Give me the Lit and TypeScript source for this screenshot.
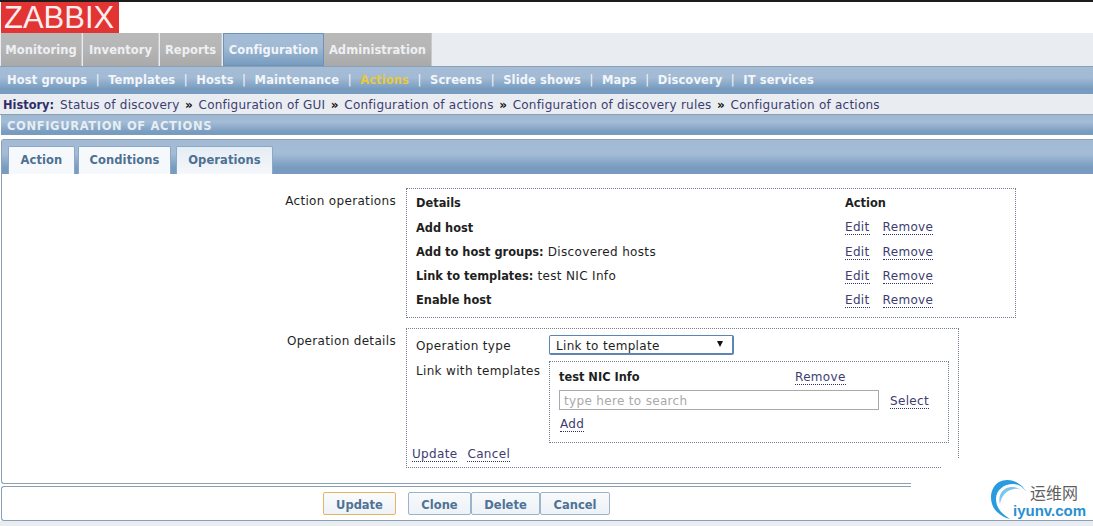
import { LitElement, html, css } from "lit";
import { customElement } from "lit/decorators.js";

const mainTabs = [
  { label: "Monitoring", w: 81 },
  { label: "Inventory", w: 76 },
  { label: "Reports", w: 62 },
  { label: "Configuration", w: 101, active: true },
  { label: "Administration", w: 108 },
];
const subTabs = ["Host groups", "Templates", "Hosts", "Maintenance", "Actions", "Screens", "Slide shows", "Maps", "Discovery", "IT services"];
const history = ["Status of discovery", "Configuration of GUI", "Configuration of actions", "Configuration of discovery rules", "Configuration of actions"];
const operations = [
  { bold: "Add host", text: "" },
  { bold: "Add to host groups:", text: " Discovered hosts" },
  { bold: "Link to templates:", text: " test NIC Info" },
  { bold: "Enable host", text: "" },
];

@customElement("app-root")
export class AppRoot extends LitElement {
  static styles = css`
    :host {
      display: block;
      position: relative;
      width: 1093px;
      height: 526px;
      overflow: hidden;
      background: #fff;
      font-family: "DejaVu Sans", Verdana, sans-serif;
      font-size: 12px;
      letter-spacing: 0.33px;
      color: #1f1f1f;
    }
    b {
      font-size: 11.4px;
      letter-spacing: 0;
    }
    .top {
      height: 33px;
      box-sizing: border-box;
      border-top: 2px solid #1c1c1c;
      padding-left: 1px;
    }
    .logo {
      width: 118px;
      height: 31px;
      background: #e33434;
      color: #fbeeee;
      font-family: "Liberation Sans", sans-serif;
      font-size: 31px;
      line-height: 30px;
      letter-spacing: 0;
      padding: 1px 0 0 3px;
      box-sizing: border-box;
    }
    .main-menu {
      display: flex;
      height: 33px;
      background: #e9edf1;
      padding-left: 1px;
    }
    .main-tab {
      box-sizing: border-box;
      height: 33px;
      margin-right: 1px;
      display: flex;
      align-items: center;
      justify-content: center;
      font-weight: bold;
      font-size: 11.5px;
      letter-spacing: 0.05px;
      color: #eef0f2;
      background: linear-gradient(#b9b9b9, #b6b6b6 45%, #a9a9a9);
      border-right: 1px solid #c9c9c9;
    }
    .main-tab.active {
      margin-right: 0;
      color: #f1f5f9;
      background: linear-gradient(#a4bcd6, #a2bad4 40%, #789cc0);
      border: 1px solid #6f93b8;
    }
    .sub-menu {
      box-sizing: border-box;
      height: 28px;
      display: flex;
      align-items: center;
      padding: 0 0 2px 7px;
      border-top: 1px solid #8ba0b5;
      background: linear-gradient(#a4bcd6, #a2bad4 40%, #789cc0 80%);
      color: #f2f6fa;
      font-weight: bold;
      font-size: 11.5px;
      letter-spacing: 0.11px;
    }
    .sub-menu .on {
      color: #e8c93d;
    }
    .sep {
      font-weight: normal;
      color: #f2f6fa;
      padding: 0 8.5px;
    }
    .history {
      box-sizing: border-box;
      height: 21px;
      display: flex;
      align-items: center;
      padding: 1px 0 0 3px;
      white-space: pre;
      background: #e9edf1;
      color: #3d3c70;
      border-bottom: 1px solid #8ba0b5;
      letter-spacing: 0.23px;
    }
    .history b {
      color: #2f2f68;
      margin-right: 6px;
    }
    .history i {
      font-style: normal;
      font-weight: bold;
      color: #111;
      margin: 0 5.5px;
    }
    .title {
      box-sizing: border-box;
      height: 20px;
      padding: 1px 0 0 6px;
      line-height: 20px;
      margin-left: 1px;
      color: #e6edf3;
      font-weight: bold;
      font-size: 11.5px;
      letter-spacing: 0.63px;
      background: linear-gradient(#9db7d2, #a4bcd6 35%, #789cc0 85%);
    }
    .form {
      box-sizing: border-box;
      height: 345px;
      margin: 4px 0 0 1px;
      border: 1px solid #8ba0b5;
      border-right: 0;
      border-radius: 3px 0 0 3px;
    }
    .tabs {
      height: 34px;
      box-sizing: border-box;
      display: flex;
      align-items: flex-end;
      padding-left: 6px;
      background: linear-gradient(#a2bad4, #a4bcd6 40%, #789cc0 80%);
    }
    .tab {
      box-sizing: border-box;
      height: 28px;
      padding-bottom: 2px;
      display: flex;
      align-items: center;
      justify-content: center;
      font-weight: bold;
      font-size: 11.5px;
      letter-spacing: 0.1px;
      color: #4d7093;
      background: #f6f9fb;
      border: 1px solid #8ba9c6;
      border-bottom: 0;
      border-radius: 2px 2px 0 0;
    }
    .tab.on {
      background: linear-gradient(#e4ecf4, #f5f8fb);
    }
    .rows {
      display: grid;
      grid-template-columns: 394px auto;
      column-gap: 10px;
      row-gap: 10px;
      padding-top: 14px;
      justify-content: start;
    }
    .label {
      text-align: right;
      padding-top: 6px;
      line-height: 15px;
    }
    .box {
      box-sizing: border-box;
      border: 1px dotted #6f7f8f;
    }
    .ops {
      width: 610px;
      height: 130px;
      padding: 2px 9px;
    }
    .op {
      height: 24px;
      display: grid;
      grid-template-columns: 429px auto;
      align-items: center;
      white-space: pre;
    }
    .op:nth-child(2) {
      height: 25px;
    }
    .actions {
      display: flex;
      gap: 13px;
    }
    a {
      color: #3d3c70;
      text-decoration: none;
      border-bottom: 1px dotted #2f2f68;
      padding-top: 2px;
      line-height: 14px;
    }
    .actions a {
      padding-top: 0;
    }
    .details {
      width: 553px;
      height: 140px;
      padding: 6px 9px 0;
      position: relative;
    }
    .type-row {
      display: grid;
      grid-template-columns: 133px auto;
      align-items: center;
      height: 20px;
    }
    .type-label {
      padding-top: 1px;
    }
    .select {
      box-sizing: border-box;
      width: 185px;
      height: 20px;
      border: 1px solid #5e86b3;
      border-width: 1px 2px 2px 1px;
      border-radius: 2px;
      display: flex;
      align-items: center;
      justify-content: space-between;
      padding: 2px 7px 0 6px;
    }
    .arrow {
      width: 0;
      height: 0;
      border: 3.5px solid transparent;
      border-top: 6px solid #111;
      border-bottom: 0;
      margin: 0 2px 3px 0;
    }
    .link-row {
      display: grid;
      grid-template-columns: 133px auto;
      margin-top: 6px;
    }
    .templates {
      width: 400px;
      height: 82px;
      padding: 6px 9px 0;
    }
    .tpl-name {
      display: grid;
      grid-template-columns: 236px auto;
      height: 17px;
      align-items: center;
    }
    .tpl-name a {
      justify-self: start;
    }
    .search {
      display: flex;
      align-items: center;
      gap: 11px;
      margin-top: 5px;
    }
    .input {
      box-sizing: border-box;
      width: 320px;
      height: 20px;
      border: 1px solid #a9a9a9;
      color: #a9a9a9;
      padding-left: 4px;
      line-height: 20px;
    }
    .add {
      margin: 5px 0 0 1px;
    }
    .add a {
      display: inline-block;
    }
    .link-text {
      padding-top: 3px;
    }
    .foot-links {
      display: flex;
      gap: 10px;
      margin: 2px 0 0 -4px;
    }
    .foot {
      box-sizing: border-box;
      height: 35px;
      margin: 2px 0 0 1px;
      border: 1px solid #8ba0b5;
      border-right: 0;
      border-radius: 3px 0 0 3px;
      display: flex;
      align-items: flex-start;
      padding: 5px 0 0 321px;
    }
    .btn {
      box-sizing: border-box;
      height: 23px;
      padding-top: 2px;
      display: flex;
      align-items: center;
      justify-content: center;
      font-weight: bold;
      font-size: 11.5px;
      letter-spacing: 0;
      color: #4f7295;
      background: linear-gradient(#f8fafc, #ecf2f7);
      border: 1px solid #9db3c9;
      border-radius: 2px;
    }
    .btn.primary {
      border-color: #e8b55f;
      margin-right: 12px;
      background: linear-gradient(#fafbfc, #eef3f8);
    }
    .bottom {
      height: 5px;
      background: #e9edf1;
    }
    .mark {
      position: absolute;
      left: 0;
      top: 0;
      width: 1093px;
      height: 520px;
      background: #fff;
      clip-path: polygon(942px 458px, 1093px 458px, 1093px 519px, 950px 519px, 950px 489px, 911px 489px, 911px 480px, 942px 480px);
    }
    .brand {
      position: absolute;
      left: 988px;
      top: 478px;
      width: 105px;
      height: 42px;
    }
    .brand svg {
      position: absolute;
      left: 0;
      top: 0;
    }
    .cn {
      position: absolute;
      left: 42px;
      top: 5px;
      font-family: "Noto Sans CJK SC", sans-serif;
      font-size: 16px;
      line-height: 18px;
      letter-spacing: 0;
      color: #5f5f5f;
    }
    .en {
      position: absolute;
      left: 25px;
      top: 24px;
      font-family: "Liberation Sans", sans-serif;
      font-weight: bold;
      font-size: 15px;
      line-height: 18px;
      letter-spacing: 0;
      color: #2a8fd0;
    }
  `;

  render() {
    return html`
      <div class="top"><div class="logo">ZABBIX</div></div>
      <nav class="main-menu">
        ${mainTabs.map(
          (t) => html`<div class="main-tab ${t.active ? "active" : ""}" style="width:${t.w}px">${t.label}</div>`
        )}
      </nav>
      <nav class="sub-menu">
        ${subTabs.map(
          (s, i) => html`${i > 0 ? html`<span class="sep">|</span>` : ""}<span class="${s === "Actions" ? "on" : ""}">${s}</span>`
        )}
      </nav>
      <div class="history">
        <b>History:</b>
        ${history.map((h, i) => html`${i > 0 ? html`<i>»</i>` : ""}<span>${h}</span>`)}
      </div>
      <div class="title">CONFIGURATION OF ACTIONS</div>
      <section class="form">
        <div class="tabs">
          <div class="tab" style="width:67px;margin-right:3px">Action</div>
          <div class="tab" style="width:93px;margin-right:5px">Conditions</div>
          <div class="tab on" style="width:97px">Operations</div>
        </div>
        <div class="rows">
          <div class="label">Action operations</div>
          <div class="box ops">
            <div class="op"><b>Details</b><b>Action</b></div>
            ${operations.map(
              (o) => html`<div class="op">
                <span><b>${o.bold}</b>${o.text}</span>
                <span class="actions"><a>Edit</a><a>Remove</a></span>
              </div>`
            )}
          </div>
          <div class="label">Operation details</div>
          <div class="box details">
            <div class="type-row">
              <span class="type-label">Operation type</span>
              <div class="select"><span>Link to template</span><span class="arrow"></span></div>
            </div>
            <div class="link-row">
              <span class="link-text">Link with templates</span>
              <div class="box templates">
                <div class="tpl-name"><b>test NIC Info</b><a>Remove</a></div>
                <div class="search"><div class="input">type here to search</div><a>Select</a></div>
                <div class="add"><a>Add</a></div>
              </div>
            </div>
            <div class="foot-links"><a>Update</a><a>Cancel</a></div>
          </div>
        </div>
      </section>
      <div class="foot">
        <div class="btn primary" style="width:73px">Update</div>
        <div class="btn" style="width:63px">Clone</div>
        <div class="btn" style="width:69px">Delete</div>
        <div class="btn" style="width:70px">Cancel</div>
      </div>
      <div class="bottom"></div>
      <div class="mark"></div>
      <div class="brand">
        <svg width="50" height="42" viewBox="0 0 50 42">
          <path d="M39 15C33 3 20 -1 11 4C2 9 0 24 8 33C12 37 17 40 22 41C14 36 8 30 8 21C8 12 16 6 25 6C31 6 36 10 39 15Z" fill="#2a9bdc" />
          <path d="M33 12C27 7 17 8 13 15C11 19 11 23 12 26C13 19 18 12 26 11C29 10.5 31 11 33 12Z" fill="#7cc6ec" />
        </svg>
        <span class="cn">运维网</span>
        <span class="en">iyunv.com</span>
      </div>
    `;
  }
}
